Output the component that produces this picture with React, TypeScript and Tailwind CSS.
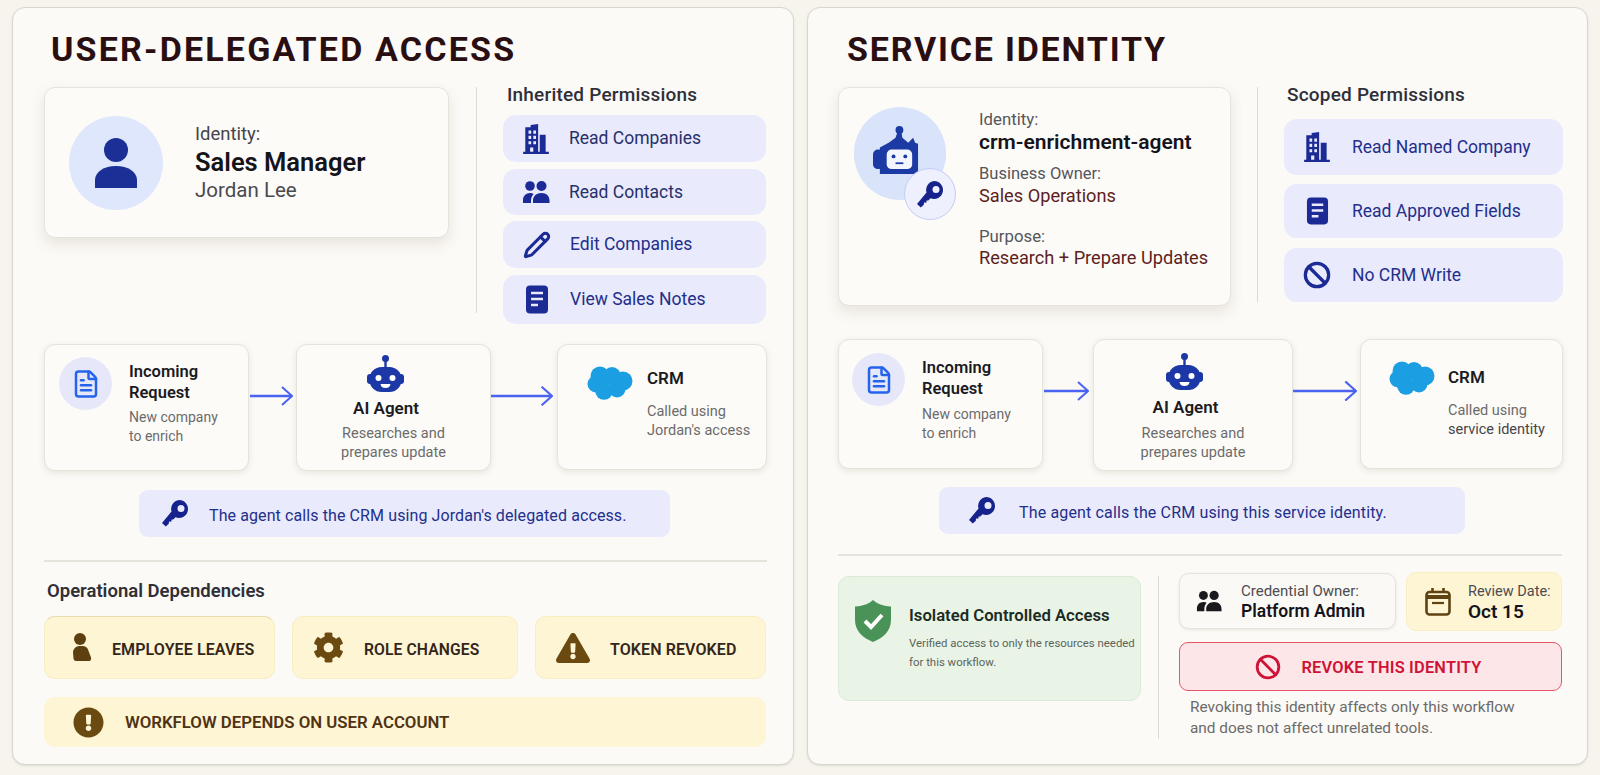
import React from "react";
import { Ban, FileText, Pencil } from "lucide-react";
import { FaCog, FaExclamationCircle, FaExclamationTriangle } from "react-icons/fa";

const NAVY = "#1b2a94";

function Building({ c = "w-[30px] h-[30px]" }: { c?: string }) {
  return (
    <svg viewBox="0 0 26 28" className={c} fill={NAVY}>
      <path fillRule="evenodd" d="M3 3h5V1l7-1v27H3V3Zm3 3v3h2.500V6H6Zm4.500 0v3H13V6h-2.500ZM6 11v3h2.500v-3H6Zm4.500 0v3H13v-3h-2.500ZM6 16v3h2.500v-3H6Zm4.500 0v3H13v-3h-2.500ZM7.500 22v5h3v-5h-3Z" />
      <path d="M16.500 10H22v17h-5.500zM1 26h24v2H1z" />
    </svg>
  );
}
function People({ color = NAVY, c = "w-[28px] h-[28px]" }: { color?: string; c?: string }) {
  return (
    <svg viewBox="0 0 28 24" className={c} fill={color}>
      <circle cx="8" cy="6" r="4.800" />
      <circle cx="19.500" cy="6" r="5" />
      <path d="M1 23v-3c0-4 3-7 7-7 1.500 0 2.500.4 3.500 1-1.500 1.700-2.500 4-2.500 6.500V23H1ZM11 23v-2.500c0-4.500 3.500-7.500 8.500-7.500s8 3 8 7.500V23H11Z" />
    </svg>
  );
}
function Note({ c = "w-[24px] h-[29px]" }: { c?: string }) {
  return (
    <svg viewBox="0 0 24 29" className={c}>
      <rect x="1" y="0.500" width="22" height="28" rx="4" fill={NAVY} />
      <path d="M6 8h12M6 14h12M6 20h7" stroke="#e9eafb" strokeWidth="2.600" />
    </svg>
  );
}
function Key({ c = "w-[27px] h-[27px]" }: { c?: string }) {
  return (
    <svg viewBox="0 0 27 27" className={c} fill="#17238c">
      <path fillRule="evenodd" d="M17 0a9 9 0 1 1-3.500 17.300L11 19.800l-1.200-.6-.6 2.600-2.200-.3-.2 2.300-3 2.700L0 23l9.500-11.500A9 9 0 0 1 17 0Zm2 5a3.500 3.500 0 1 0 0 7 3.500 3.500 0 0 0 0-7Z" />
    </svg>
  );
}
function Robot({ c = "w-[37px] h-[37px]" }: { c?: string }) {
  return (
    <svg viewBox="0 0 37 37" className={c} fill="#1c38a6">
      <circle cx="18.500" cy="3.500" r="3.500" />
      <rect x="17.300" y="4" width="2.400" height="9" />
      <rect x="0" y="19" width="6" height="10" rx="3" />
      <rect x="31" y="19" width="6" height="10" rx="3" />
      <rect x="2.500" y="12" width="32" height="25" rx="12" />
      <circle cx="11.500" cy="23" r="3" fill="#fff" />
      <circle cx="25.500" cy="23" r="3" fill="#fff" />
      <path d="M13.500 29h10c-.5 3-2.500 4-5 4s-4.500-1-5-4Z" fill="#fff" />
    </svg>
  );
}
function Cloud({ c = "w-[46px] h-[34px]" }: { c?: string }) {
  return (
    <svg viewBox="0 0 46 34" className={c} fill="#1c9fe2">
      <circle cx="13" cy="10" r="9.500" />
      <circle cx="25" cy="10" r="9" />
      <circle cx="36" cy="15" r="9.500" />
      <circle cx="9" cy="18" r="8.500" />
      <circle cx="17" cy="25" r="8.800" />
      <circle cx="30" cy="23" r="8.500" />
    </svg>
  );
}
function Arrow({ c }: { c: string }) {
  return (
    <svg viewBox="0 0 60 20" preserveAspectRatio="xMaxYMid slice" className={c} fill="none" stroke="#4a63f0">
      <path d="M0 10h59" strokeWidth="2.400" />
      <path d="M49 1l10 9-10 9" strokeWidth="2" />
    </svg>
  );
}
function Person() {
  return (
    <svg viewBox="0 0 20 29" className="h-[29px] w-[20px]" fill="#5e3f0f">
      <circle cx="8" cy="6" r="6" />
      <path d="M3 15c1-1.500 3-2 5.500-2h2c3 0 4.500 1.500 5.500 3.500l3 8c.5 2-.3 3.500-2 3.500H4c-1.500 0-2.200-1-2.500-2.500L1 19c0-1.500 1-3 2-4Z" />
    </svg>
  );
}
function Shield() {
  return (
    <svg viewBox="0 0 36 42" className="h-[42px] w-[36px] shrink-0">
      <path d="M18 0c3 3 9 6 18 6.500V20c0 11-8 18-18 22C8 38 0 31 0 20V6.500C9 6 15 3 18 0Z" fill="#4a9358" />
      <path d="M10 21l6 6 11-12" fill="none" stroke="#fff" strokeWidth="4" />
    </svg>
  );
}
function Calendar() {
  return (
    <svg viewBox="0 0 26 28" className="h-[28px] w-[26px] shrink-0" fill="none" stroke="#5f4312">
      <rect x="1.500" y="4" width="23" height="22.500" rx="3" strokeWidth="2.600" />
      <path d="M1.500 9h23" strokeWidth="4" />
      <path d="M7.500 0v5M18.500 0v5" strokeWidth="2.600" />
      <path d="M7 15h12" strokeWidth="2.200" />
    </svg>
  );
}

function Perm({ icon, label, h, iconW, textX, dark, mt }: { icon: React.ReactNode; label: string; h: string; iconW: string; textX: string; dark?: boolean; mt: string }) {
  return (
    <div className={`flex items-center rounded-[13px] bg-[#e9eafb] ${h} ${mt}`}>
      <div className={`flex shrink-0 justify-center ${iconW}`}>{icon}</div>
      <span className={`text-[17.500px] ${textX} ${dark ? "text-[#27306a]" : "text-[#232f8c]"}`}>{label}</span>
    </div>
  );
}

const cardCls = "rounded-[11px] border border-[#e6e3dd] bg-[#fdfbf8] shadow-[0_2px_6px_rgba(90,80,60,0.12)]";

function Incoming({ w, h, pad, textTop, descTop }: { w: string; h: string; pad: string; textTop: string; descTop: string }) {
  return (
    <div className={`${cardCls} flex shrink-0 gap-[17px] ${w} ${h} ${pad}`}>
      <div className="flex h-[53px] w-[53px] shrink-0 items-center justify-center rounded-full bg-[#e6e8fa]">
        <FileText size={30} color="#2563eb" strokeWidth={2} />
      </div>
      <div className={textTop}>
        <div className="text-[16.500px] leading-[20.500px] font-semibold text-[#1a1a22]">
          Incoming<br />Request
        </div>
        <div className={`text-[14px] leading-[18.500px] text-[#6b6b6b] ${descTop}`}>
          New company<br />to enrich
        </div>
      </div>
    </div>
  );
}

function Agent({ w, h, top, nameTop, descTop }: { w: string; h: string; top: string; nameTop: string; descTop: string }) {
  return (
    <div className={`${cardCls} flex shrink-0 flex-col items-center ${w} ${h} ${top}`}>
      <div className="mr-[17px]">
        <Robot />
      </div>
      <div className={`mr-[15px] text-[17px] leading-[24px] font-semibold text-[#1a1a22] ${nameTop}`}>AI Agent</div>
      <div className={`text-center text-[14.500px] leading-[19px] text-[#6b6b6b] ${descTop}`}>
        Researches and<br />prepares update
      </div>
    </div>
  );
}

function Crm({ w, h, pad, gap, top, descTop, l2 }: { w: string; h: string; pad: string; gap: string; top: string; descTop: string; l2: React.ReactNode }) {
  return (
    <div className={`${cardCls} flex shrink-0 ${w} ${h} ${pad} ${gap}`}>
      <div className={top}>
        <Cloud />
      </div>
      <div>
        <div className="text-[17px] leading-[24px] font-semibold text-[#1a1a22]">CRM</div>
        <div className={`text-[14.500px] leading-[18.500px] text-[#6b6b6b] ${descTop}`}>
          Called using<br />{l2}
        </div>
      </div>
    </div>
  );
}

function Amber({ icon, label, w, iconW, textCls }: { icon: React.ReactNode; label: string; w: string; iconW: string; textCls: string }) {
  return (
    <div className={`flex h-[63px] items-center rounded-[11px] border border-[#f9edc2] bg-[#fef5d4] ${w}`}>
      <div className={`flex shrink-0 justify-center ${iconW}`}>{icon}</div>
      <span className={`mt-[5px] font-semibold tracking-[0.1px] text-[#33261a] ${textCls}`}>{label}</span>
    </div>
  );
}

export default function App() {
  return (
    <div className="flex h-[775px] w-[1600px] gap-[13px] overflow-hidden bg-[#f7f4ee] pl-[12px] pt-[7px] font-['Roboto',sans-serif]">
      {/* LEFT */}
      <section className="h-[758px] w-[782px] shrink-0 rounded-[13px] border border-[#d9d6cf] bg-[#fcfaf6] pl-[31px] pt-[21px] shadow-[0_1px_2px_rgba(90,80,60,0.15)]">
        <h1 className="ml-[7px] h-[40px] text-[34px] leading-[40px] font-bold tracking-[2.200px] text-[#2a0f12]">USER-DELEGATED ACCESS</h1>
        <div className="mt-[18px] flex h-[238px] items-start">
          <div className={`${cardCls} flex h-[151px] w-[405px] items-center pl-[24px] shadow-[0_6px_14px_rgba(90,80,60,0.13)]`}>
            <div className="flex h-[94px] w-[94px] shrink-0 flex-col items-center justify-center rounded-full bg-[#dfe7fc]">
              <svg viewBox="0 0 42 50" className="h-[50px] w-[42px]" fill="#1b2f96">
                <ellipse cx="21" cy="12" rx="12" ry="12" />
                <path d="M0 50V42c0-8 9-14 21-14s21 6 21 14v8H0Z" />
              </svg>
            </div>
            <div className="ml-[32px]">
              <div className="text-[18.500px] leading-[28px] text-[#44444a]">Identity:</div>
              <div className="text-[25.500px] leading-[28px] font-semibold text-[#14141a]">Sales Manager</div>
              <div className="text-[20.500px] leading-[29px] text-[#4a4a4e]">Jordan Lee</div>
            </div>
          </div>
          <div className="ml-[27px] h-[226px] w-px bg-[#dedbd5]" />
          <div className="ml-[26px] w-[263px]">
            <div className="ml-[4px] text-[19px] leading-[16px] font-medium tracking-[0.2px] text-[#2f2f38]">Inherited Permissions</div>
            <Perm mt="mt-[12px]" h="h-[47px]" iconW="w-[66px]" textX="" dark icon={<Building />} label="Read Companies" />
            <Perm mt="mt-[7px]" h="h-[46px]" iconW="w-[66px]" textX="" dark icon={<People />} label="Read Contacts" />
            <Perm mt="mt-[6px]" h="h-[47px]" iconW="w-[67px]" textX="" icon={<Pencil size={28} color={NAVY} strokeWidth={2.600} />} label="Edit Companies" />
            <Perm mt="mt-[7px]" h="h-[49px]" iconW="w-[67px]" textX="" icon={<Note />} label="View Sales Notes" />
          </div>
        </div>
        <div className="mt-[19px] flex h-[127px] w-[723px]">
          <Incoming w="w-[205px]" h="h-[127px]" pad="pl-[14px] pt-[12px]" textTop="mt-[5px]" descTop="mt-[5px]" />
          <Arrow c="mt-[42px] ml-[1px] h-[20px] w-[43px] shrink-0" />
          <div className="ml-[3px]">
            <Agent w="w-[195px]" h="h-[127px]" top="pt-[10px]" nameTop="mt-[4px]" descTop="mt-[4px]" />
          </div>
          <Arrow c="mt-[42px] h-[20px] w-[62px] shrink-0" />
          <div className="ml-[4px]">
            <Crm w="w-[210px]" h="h-[126px]" pad="pl-[29px] pt-[21px]" gap="gap-[14px]" top="" descTop="mt-[13px]" l2="Jordan's access" />
          </div>
        </div>
        <div className="ml-[95px] mt-[19px] flex h-[47px] w-[531px] items-center rounded-[9px] bg-[#e9eafb]">
          <div className="ml-[23px] w-[47px] shrink-0"><Key /></div>
          <span className="mt-[5px] text-[16px] tracking-[0.1px] text-[#232f8c]">The agent calls the CRM using Jordan's delegated access.</span>
        </div>
        <div className="mt-[23px] h-[2px] w-[723px] bg-[#e6e3dd]" />
        <div className="ml-[3px] mt-[19px] text-[18.500px] leading-[20px] font-semibold text-[#2f2f38]">Operational Dependencies</div>
        <div className="mt-[15px] flex w-[722px]">
          <Amber w="w-[231px] border-t-[#eadcab]" iconW="w-[67px] pl-[7px]" textCls="text-[16px]" icon={<Person />} label="EMPLOYEE LEAVES" />
          <div className="w-[17px]" />
          <Amber w="w-[226px]" iconW="w-[71px]" textCls="text-[15.700px]" icon={<FaCog size={31} color="#6b4a12" />} label="ROLE CHANGES" />
          <div className="w-[17px]" />
          <Amber w="w-[231px]" iconW="w-[74px]" textCls="text-[16px]" icon={<FaExclamationTriangle size={34} color="#6b4a12" />} label="TOKEN REVOKED" />
        </div>
        <div className="mt-[18px] flex h-[50px] w-[722px] items-center rounded-[11px] bg-[#fef5d4]">
          <div className="ml-[29px] w-[31px] shrink-0"><FaExclamationCircle size={31} color="#6b4a12" /></div>
          <span className="ml-[21px] mt-[2px] text-[16.800px] font-semibold text-[#4f3313]">WORKFLOW DEPENDS ON USER ACCOUNT</span>
        </div>
      </section>

      {/* RIGHT */}
      <section className="h-[758px] w-[781px] shrink-0 rounded-[13px] border border-[#d9d6cf] bg-[#fcfaf6] pl-[30px] pt-[21px] shadow-[0_1px_2px_rgba(90,80,60,0.15)]">
        <h1 className="ml-[9px] h-[40px] text-[34px] leading-[40px] font-bold tracking-[1.800px] text-[#2a0f12]">SERVICE IDENTITY</h1>
        <div className="mt-[18px] flex h-[233px] items-start">
          <div className={`${cardCls} flex h-[219px] w-[393px] pl-[15px] pt-[19px] shadow-[0_6px_14px_rgba(90,80,60,0.13)]`}>
            <div className="relative h-[93px] w-[92px] shrink-0 rounded-full bg-[#d9e4fb]">
              <div className="flex h-[93px] items-center justify-center pb-[6px] pr-[8px]">
                <svg viewBox="0 0 48 50" className="h-[49px] w-[47px]" fill="#1c3aa3">
                  <circle cx="27" cy="4" r="4" />
                  <path d="M25 6h4l1 6 6 5 5-5 2 5 3 1v31H7V22l9-5 7-5Z" />
                  <rect x="0" y="24" width="11" height="20" rx="5" />
                  <rect x="14" y="24" width="26" height="20" rx="5" fill="#f3f6fe" />
                  <circle cx="21" cy="31" r="2" />
                  <circle cx="33" cy="31" r="2" />
                  <path d="M23 38h8" stroke="#1c3aa3" strokeWidth="1.800" />
                </svg>
              </div>
              <div className="absolute left-[50px] top-[61px] flex h-[52px] w-[52px] items-center justify-center rounded-full border border-[#c5cdf6] bg-[#eef0fd]">
                <Key />
              </div>
            </div>
            <div className="ml-[33px] mt-[1px]">
              <div className="text-[16.800px] leading-[22px] text-[#55555a]">Identity:</div>
              <div className="text-[21px] leading-[24px] font-semibold text-[#14141a]">crm-enrichment-agent</div>
              <div className="mt-[9px] text-[16.500px] leading-[22px] text-[#55555a]">Business Owner:</div>
              <div className="text-[18.200px] leading-[22px] text-[#5c1f20]">Sales Operations</div>
              <div className="mt-[18px] text-[16.800px] leading-[22px] text-[#55555a]">Purpose:</div>
              <div className="text-[18.200px] leading-[22px] text-[#5c1f20]">Research + Prepare Updates</div>
            </div>
          </div>
          <div className="ml-[26px] h-[215px] w-px bg-[#dedbd5]" />
          <div className="ml-[26px] w-[279px]">
            <div className="ml-[3px] text-[19px] leading-[16px] font-medium tracking-[0.2px] text-[#2f2f38]">Scoped Permissions</div>
            <Perm mt="mt-[16px]" h="h-[56px]" iconW="w-[66px]" textX="ml-[2px]" icon={<Building c="h-[30px] w-[28px]" />} label="Read Named Company" />
            <Perm mt="mt-[9px]" h="h-[54px]" iconW="w-[66px]" textX="ml-[2px]" icon={<Note c="h-[28px] w-[23px]" />} label="Read Approved Fields" />
            <Perm mt="mt-[10px]" h="h-[54px]" iconW="w-[66px]" textX="ml-[2px]" icon={<Ban size={28} color={NAVY} strokeWidth={2.800} />} label="No CRM Write" />
          </div>
        </div>
        <div className="mt-[19px] flex h-[132px] w-[723px]">
          <Incoming w="w-[205px]" h="h-[130px]" pad="pl-[13px] pt-[13px]" textTop="mt-[5px]" descTop="mt-[6px]" />
          <Arrow c="mt-[42px] ml-[1px] h-[20px] w-[45px] shrink-0" />
          <div className="ml-[4px]">
            <Agent w="w-[200px]" h="h-[132px]" top="pt-[13px]" nameTop="mt-[5px]" descTop="mt-[5px]" />
          </div>
          <Arrow c="mt-[42px] h-[20px] w-[64px] shrink-0" />
          <div className="ml-[3px]">
            <Crm w="w-[203px]" h="h-[130px]" pad="pl-[28px] pt-[25px]" gap="gap-[13px]" top="-mt-[4px]" descTop="mt-[13px]" l2={<span className="text-[#46464a]">service identity</span>} />
          </div>
        </div>
        <div className="ml-[101px] mt-[16px] flex h-[47px] w-[526px] items-center rounded-[9px] bg-[#e9eafb]">
          <div className="ml-[30px] w-[50px] shrink-0"><Key /></div>
          <span className="mt-[5px] text-[16px] tracking-[0.15px] text-[#232f8c]">The agent calls the CRM using this service identity.</span>
        </div>
        <div className="mt-[20px] h-[2px] w-[724px] bg-[#e6e3dd]" />
        <div className="mt-[19px] flex">
          <div className="mt-[1px] flex h-[125px] w-[303px] shrink-0 rounded-[11px] border border-[#dbe9d8] bg-[#e9f4e6] pl-[16px] pt-[23px]">
            <Shield />
            <div className="ml-[18px]">
              <div className="mt-[5px] text-[16.700px] leading-[22px] font-semibold text-[#1c2b24]">Isolated Controlled Access</div>
              <div className="mt-[7px] whitespace-nowrap text-[11.400px] leading-[19px] text-[#5d635c]">
                Verified access to only the resources needed<br />for this workflow.
              </div>
            </div>
          </div>
          <div className="ml-[17px] mt-[1px] h-[163px] w-px shrink-0 bg-[#dedbd5]" />
          <div className="ml-[20px] w-[383px]">
            <div className="-mt-[2px] flex items-start">
              <div className="flex h-[56px] w-[217px] items-center rounded-[10px] border border-[#e6e3dd] bg-[#fbf9f6] pl-[16px] shadow-[0_1px_3px_rgba(90,80,60,0.12)]">
                <People color="#1a1a1e" c="h-[24px] w-[26px] shrink-0" />
                <div className="ml-[19px]">
                  <div className="text-[15px] leading-[19px] text-[#4c4c50]">Credential Owner:</div>
                  <div className="text-[17.500px] leading-[20px] font-semibold text-[#14141a]">Platform Admin</div>
                </div>
              </div>
              <div className="-mt-[1px] ml-[10px] flex h-[59px] w-[156px] items-center rounded-[10px] border border-[#f9edc2] bg-[#fef5d4] pl-[18px]">
                <Calendar />
                <div className="ml-[17px]">
                  <div className="text-[14.500px] leading-[19px] text-[#4c4c50]">Review Date:</div>
                  <div className="text-[19px] leading-[21px] font-semibold text-[#14141a]">Oct 15</div>
                </div>
              </div>
            </div>
            <div className="mt-[11px] flex h-[49px] items-center justify-center rounded-[9px] border-[1.500px] border-[#e8556b] bg-[#fde6e8] pr-[4px]">
              <Ban size={26} color="#cf1236" strokeWidth={2.600} />
              <span className="ml-[20px] mt-[4px] text-[16.400px] font-semibold tracking-[0.2px] text-[#cf1236]">REVOKE THIS IDENTITY</span>
            </div>
            <div className="ml-[11px] mt-[6px] text-[15.400px] leading-[21px] text-[#6b6b6b]">
              Revoking this identity affects only this workflow<br />and does not affect unrelated tools.
            </div>
          </div>
        </div>
      </section>
    </div>
  );
}
